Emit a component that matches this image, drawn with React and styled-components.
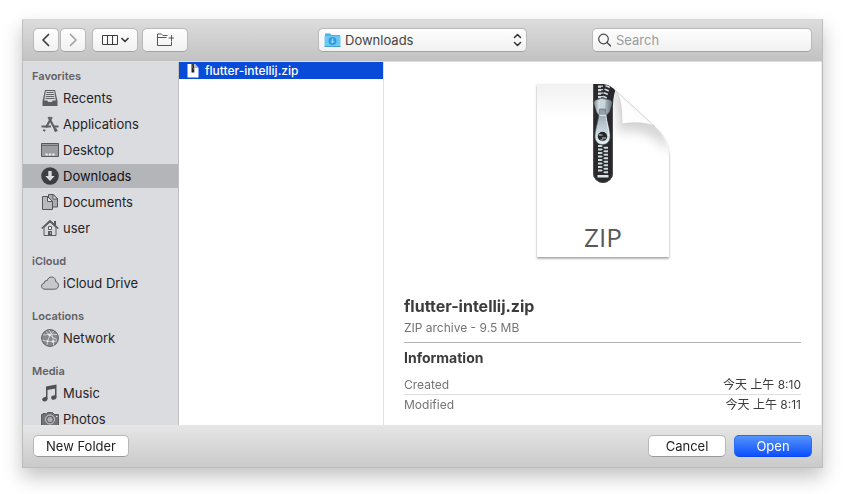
import React from "react";
import styled, { createGlobalStyle, css } from "styled-components";

const GlobalStyle = createGlobalStyle`
  * { box-sizing: border-box; }
  html, body, #root { height: 100%; }
  body {
    margin: 0;
    background: #fff;
    font-family: Inter, "Noto Sans CJK SC", sans-serif;
    font-size: 13px;
    color: #262626;
  }
  button, input, select { font: inherit; color: inherit; }
`;

const Desktop = styled.div`
  display: flex;
  height: 100%;
  padding: 19px 22px 26px;
`;

const Dialog = styled.main`
  flex: 1;
  min-width: 0;
  display: flex;
  flex-direction: column;
  border: 1px solid #bdbdbd;
  border-top-color: #d8d8d8;
  box-shadow: 0 9px 18px rgba(0, 0, 0, 0.24);
`;

const Toolbar = styled.header`
  display: grid;
  grid-template-columns: 1fr minmax(120px, 209px) 1fr;
  align-items: center;
  height: 42px;
  flex: none;
  padding: 0 10px 2px;
  border-bottom: 1px solid #dedede;
  background: linear-gradient(#dcdcdc, #c2c2c2);
`;

const Tools = styled.div`
  display: flex;
  gap: 4px;
`;

const Segments = styled.div`
  display: flex;
  gap: 1px;
  margin-right: 2px;
`;

const raised = css`
  height: 24px;
  border: 1px solid #b9b9b9;
  border-bottom-color: #a3a3a3;
  border-radius: 5px;
  background: linear-gradient(#fefefe, #f1f1f1);
`;

const ToolButton = styled.button`
  ${raised}
  display: flex;
  align-items: center;
  justify-content: center;
  gap: 4px;
  width: ${(p) => (p.$narrow ? 26 : 46)}px;
  padding: 0;
  color: #3c3c3c;
`;

const FieldBox = styled.label`
  ${raised}
  display: flex;
  align-items: center;
  gap: 4px;
  min-width: 0;
  padding: 0 4px 0 5px;
`;

const SearchBox = styled(FieldBox)`
  justify-self: end;
  width: 220px;
  max-width: 90%;
  gap: 5px;
`;

const LocationSelect = styled.select`
  flex: 1;
  min-width: 0;
  padding: 0;
  border: 0;
  outline: 0;
  appearance: none;
  background: none;
  color: #444;
`;

const SearchInput = styled.input`
  flex: 1;
  min-width: 0;
  padding: 0;
  border: 0;
  outline: 0;
  background: none;
  &::placeholder { color: #9b9b9b; opacity: 1; }
`;

const Body = styled.div`
  flex: 1;
  min-height: 0;
  display: flex;
  background: #fff;
`;

const Sidebar = styled.nav`
  flex: none;
  width: 156px;
  padding-top: 6px;
  overflow: hidden auto;
  scrollbar-width: none;
  border-right: 1px solid #c0c0c3;
  background: #dbdce0;
`;

const SidebarGroup = styled.section`
  display: flex;
  flex-direction: column;
  gap: 2px;
  margin-bottom: 13px;
`;

const SidebarHeading = styled.h2`
  margin: 0;
  padding-left: 9px;
  font-size: 11px;
  line-height: 16px;
  font-weight: 600;
  color: #616165;
`;

const SidebarItem = styled.button`
  display: flex;
  align-items: center;
  gap: 4px;
  height: 24px;
  flex: none;
  padding: 0 0 0 18px;
  border: 0;
  text-align: left;
  line-height: 16px;
  background: ${(p) => (p.$selected ? "#b4b5b9" : "transparent")};
  color: ${(p) => (p.$selected ? "#101010" : "#242426")};
`;

const FileColumn = styled.section`
  flex: none;
  width: 205px;
  border-right: 1px solid #e2e2e2;
`;

const FileRow = styled.button`
  display: flex;
  align-items: center;
  gap: 6px;
  width: 100%;
  height: 17px;
  padding: 0 8px 1px;
  border: 0;
  background: #084bd8;
  color: #fff;
  font-size: 12px;
  font-weight: 500;
`;

const Preview = styled.section`
  flex: 1;
  min-width: 0;
  padding: 16px 20px 0;
  border-right: 1px solid #ececec;
  color: #3c3c3c;
`;

const Artwork = styled.div`
  display: flex;
  justify-content: center;
  margin-bottom: 30px;
`;

const FileTitle = styled.h1`
  margin: 0;
  font-size: 16px;
  line-height: 20px;
  font-weight: 700;
`;

const FileKind = styled.p`
  margin: 0;
  padding: 3px 0 6px;
  border-bottom: 1px solid #b3b3b3;
  font-size: 12px;
  line-height: 17px;
  color: #747474;
`;

const InfoTitle = styled.h2`
  margin: 6px 0 8px;
  font-size: 14px;
  line-height: 18px;
  font-weight: 700;
`;

const InfoTable = styled.table`
  width: 100%;
  border-collapse: collapse;
  font-size: 12px;
  line-height: 19px;
  tr + tr { border-top: 1px solid #dedede; }
`;

const InfoName = styled.th`
  padding: 0;
  text-align: left;
  font-weight: 400;
  color: #747474;
`;

const InfoValue = styled.td`
  padding: 0;
  text-align: right;
`;

const Footer = styled.footer`
  display: flex;
  align-items: center;
  gap: 8px;
  flex: none;
  height: 42px;
  padding: 0 10px;
  background: linear-gradient(#e6e6e6, #cacaca);
`;

const PushButton = styled.button`
  height: 22px;
  min-width: 78px;
  padding: 0 12px;
  border: 1px solid ${(p) => (p.$primary ? "#2a6cf5" : "#b8b8b8")};
  border-bottom-color: ${(p) => (p.$primary ? "#0a48ee" : "#999")};
  border-radius: 5px;
  background: ${(p) => (p.$primary ? "linear-gradient(#5494fb, #0d50ff)" : "#fff")};
  color: ${(p) => (p.$primary ? "#fff" : "#222")};
`;

const Spacer = styled.div`
  flex: 1;
`;

function ChevronIcon({ d, muted }) {
  return (
    <svg width="10" height="14" viewBox="0 0 10 14" fill="none" stroke={muted ? "#a2a2a2" : "#3c3c3c"} strokeWidth="1.7" strokeLinecap="round" strokeLinejoin="round">
      <path d={d} />
    </svg>
  );
}

function ColumnsIcon() {
  return (
    <svg width="28" height="12" viewBox="0 0 28 12" fill="none" stroke="#3c3c3c">
      <path d="M1.5 1.5h15v9h-15zM6.5 1.5v9M11.5 1.5v9" />
      <path d="M21 4.5l3 3 3-3" strokeWidth="1.7" strokeLinecap="round" strokeLinejoin="round" />
    </svg>
  );
}

function NewFolderIcon() {
  return (
    <svg width="18" height="14" viewBox="0 0 18 14" fill="none" stroke="#555">
      <path d="M11.5 2.5H7L5.500 1H1.500v11.500h14V8.500M1.500 4.500h9" />
      <path d="M15.500 2v6M12.500 5h6" />
    </svg>
  );
}

function FolderIcon() {
  return (
    <svg width="17" height="16" viewBox="0 0 17 16">
      <path d="M1 1.5h5l1.5 1.5H16v12H1z" fill="#4fb0e2" />
      <path d="M.5 4h16v10.5h-16z" fill="#6cc9f5" />
      <path d="M.5 14.5h16" stroke="#489fce" />
      <circle cx="8.5" cy="9" r="4" fill="#3399da" />
      <path d="M7.7 6.500h1.600v2.700h1.600L8.500 11.600 6.100 9.200h1.600z" fill="#8dd7fa" />
    </svg>
  );
}

function UpDownIcon() {
  return (
    <svg width="9" height="14" viewBox="0 0 9 14" fill="none" stroke="#333" strokeWidth="1.5" strokeLinecap="round" strokeLinejoin="round">
      <path d="M1.500 4.500l3-3 3 3M1.500 9.500l3 3 3-3" />
    </svg>
  );
}

function SearchIcon() {
  return (
    <svg width="13" height="14" viewBox="0 0 13 14" fill="none" stroke="#444" strokeWidth="1.2" strokeLinecap="round">
      <circle cx="5.500" cy="6" r="4.800" />
      <path d="M9 9.500l3.500 3.500" />
    </svg>
  );
}

const glyphs = {
  recents: (
    <>
      <path d="M4 1h10l2.500 11v5h-15v-5z" fill="#5d5d61" />
      <path d="M4.800 2h8.400l1.600 9.500h-3l-1 1.500H7.200l-1-1.500h-3z" fill="#d5d6da" />
      <path d="M5.500 3.500h7M5 5.500h8M4.800 7.500h8.400M4.500 9.500h9" stroke="#66666a" />
    </>
  ),
  applications: (
    <g fill="none" stroke="#606064">
      <path d="M10.800 2L5 12.500M3.700 14.500l-.9 1.800" strokeWidth="2.200" />
      <path d="M7.500 2l7.300 13.500" strokeWidth="2.200" />
      <path d="M.5 11.500h9.500M13 11.500h4.500" strokeWidth="2" />
      <path d="M14 14l1.500 2.500" strokeWidth="3" />
    </g>
  ),
  desktop: (
    <>
      <path d="M.5 2.500h17v13H.5z" fill="#9c9da1" stroke="#59595d" />
      <path d="M1 4.500h16" stroke="#6b6b6f" />
      <path d="M4.500 13.500h2.200M7.900 13.500h2.200M11.300 13.500h2.200" stroke="#f0f0f2" strokeWidth="2" />
    </>
  ),
  downloads: (
    <>
      <circle cx="9" cy="9" r="8.800" fill="#3e3e41" />
      <path d="M7.300 4h3.400v5h3L9 14 4.300 9h3z" fill="#dcdce0" />
    </>
  ),
  documents: (
    <g stroke="#56565a" strokeLinejoin="round">
      <path d="M7.500 1.500h5l4 4v8.500h-9z" fill="#aaabaf" />
      <path d="M12 1.500v4.500h4.500z" fill="#ededf0" />
      <path d="M1.500 3.500h5l5 5v8h-10z" fill="#b9babe" />
      <path d="M6.500 3.500v5h5z" fill="#e8e8eb" />
    </g>
  ),
  home: (
    <>
      <path d="M13 2h2v5l-2-2z" fill="#55555a" />
      <path d="M3 8.500L9 3l6 5.500v8H3z" fill="#d8d9dd" stroke="#5c5c60" />
      <path d="M.7 9.500L9 1.800l8.300 7.700" fill="none" stroke="#55555a" strokeWidth="1.500" />
      <path d="M7.500 7.500h3v3h-3z" fill="#f0f0f2" stroke="#5c5c60" />
      <path d="M7 12h4v4.500H7z" fill="#5c5c60" />
      <path d="M9 14h1" stroke="#ddd" />
    </>
  ),
  cloud: (
    <path d="M4 15.200C1.800 15.200.5 13.900.5 12.200c0-1.700 1.200-2.900 2.700-3 0-1.900 1.400-3 2.900-2.500C6.800 4.400 8.400 3 10.500 3c2.700 0 4.400 2 4.300 4.800 1.700.4 2.700 1.800 2.700 3.500 0 2.300-1.600 3.900-3.800 3.900z" fill="#c7c8cc" stroke="#5d5d61" />
  ),
  network: (
    <>
      <circle cx="9" cy="9" r="8.400" fill="#87888c" stroke="#5c5c60" />
      <g fill="none" stroke="#d9dade" strokeWidth="0.900">
        <path d="M5 2.500c2 2 6 6 11 8M12.500 2c-3 3-6 8-6.500 14M2 6c4-.5 9-1 14-.5M1.500 11c4 1.500 10 2 14.500 1M8 1c3 4 5 9 4.500 15.500" />
      </g>
      <circle cx="8.500" cy="6" r="1.200" fill="#eee" />
      <circle cx="12" cy="12.500" r="1.200" fill="#eee" />
      <circle cx="6.500" cy="12" r="1" fill="#eee" />
    </>
  ),
  music: (
    <>
      <path d="M5 2.500L15.500.5v3.700L6.500 6v-3.500zM5 2.500h1.500V15H5zM14 3h1.500v10.500H14z" fill="#505054" />
      <ellipse cx="3.800" cy="15.200" rx="2.700" ry="2.200" transform="rotate(-20 3.800 15.200)" fill="#505054" />
      <ellipse cx="12.800" cy="13.500" rx="2.700" ry="2.200" transform="rotate(-20 12.800 13.500)" fill="#505054" />
    </>
  ),
  photos: (
    <>
      <path d="M2 3.500h2.500v1H5l1.500-2h5l1.500 2h4.500v12H.5v-12H2z" fill="#727276" stroke="#5c5c60" />
      <circle cx="9" cy="9.500" r="4.500" fill="#66666a" stroke="#d5d5d9" />
      <circle cx="9" cy="9.500" r="2.600" fill="#aeafb3" />
      <path d="M15 6.500h1.500" stroke="#e2e2e5" />
    </>
  ),
};

function SidebarIcon({ name }) {
  return (
    <svg width="18" height="18" viewBox="0 0 18 18" aria-hidden="true">
      {glyphs[name]}
    </svg>
  );
}

function SmallZipIcon() {
  return (
    <svg width="12" height="15" viewBox="0 0 12 15">
      <path d="M.5 1H8l3.500 4v9.500H.5z" fill="#fff" />
      <path d="M8 1v4h3.500z" fill="#a9bce8" />
      <path d="M4.500 1h2.800v8.500H4.500z" fill="#222" />
      <path d="M5.500 2h1M5 4h1M6 6h1" stroke="#999" />
    </svg>
  );
}

const lowerTeeth = [67, 70.5, 74, 77.5, 81, 84.5, 88, 91.5];
const upperTeeth = [7.5, 11, 14.5, 18];

function ZipDocument() {
  const sheet = "M9 6H73C79 6 83 8 87 12L127 48.500C136 57 141 66 141 79V179H9Z";
  return (
    <svg width="150" height="188" viewBox="0 0 150 188" role="img" aria-label="ZIP document">
      <defs>
        <linearGradient id="paper" x1="0" y1="0" x2="0" y2="1">
          <stop offset="0" stopColor="#f1f1f1" />
          <stop offset="0.2" stopColor="#fff" />
        </linearGradient>
        <linearGradient id="flap" x1="0" y1="1" x2="0.650" y2="0.350">
          <stop offset="0" stopColor="#fff" />
          <stop offset="0.7" stopColor="#fdfdfd" />
          <stop offset="1" stopColor="#dcdcdc" />
        </linearGradient>
        <linearGradient id="metal">
          <stop offset="0" stopColor="#858e94" />
          <stop offset="0.350" stopColor="#e9f0f4" />
          <stop offset="0.650" stopColor="#a9b3ba" />
          <stop offset="1" stopColor="#66707a" />
        </linearGradient>
        <linearGradient id="pull" x1="0" y1="0" x2="0" y2="1">
          <stop offset="0" stopColor="#8b979e" />
          <stop offset="0.450" stopColor="#b9c9d2" />
          <stop offset="1" stopColor="#e9f0f4" />
        </linearGradient>
        <filter id="sheetShadow" x="-10%" y="-10%" width="120%" height="120%">
          <feDropShadow dx="0" dy="1.500" stdDeviation="1.300" floodOpacity="0.4" />
        </filter>
        <filter id="soft" x="-50%" y="-50%" width="200%" height="200%">
          <feGaussianBlur stdDeviation="6" />
        </filter>
        <clipPath id="sheetClip"><path d={sheet} /></clipPath>
      </defs>
      <path d={sheet} fill="url(#paper)" filter="url(#sheetShadow)" />
      <g clipPath="url(#sheetClip)">
        <path d="M86 8C90 22 90 44 90 54C108 50 128 54 142 76L138 50Z" fill="#777" opacity="0.330" filter="url(#soft)" />
        <path d="M65 4H90C87 13 85 19 85 27V95a10 10 0 0 1-20 0z" fill="#29292b" />
        <path d="M65.500 5v90a9.500 9.500 0 0 0 19 0V27" fill="none" stroke="#4c4c4e" />
        {upperTeeth.map((y, i) => (
          <g key={y} fill="#cedae0">
            <path d={`M70 ${y}h5v1.200h-2v1h-3z`} />
            <path d={`M${82 - i} ${y + 1}l-4-1.500-1 1.300 4.500 2z`} />
          </g>
        ))}
        {lowerTeeth.map((y) => (
          <g key={y} fill="#ccd9df">
            <path d={`M70 ${y}h3.500l1.500 1-1.500 1h-3.500z`} />
            <path d={`M80 ${y + 1.7}h-3.500l-1.500 1 1.500 1h3.500z`} />
          </g>
        ))}
        <path d="M69.500 97h11v2.500h-11z" fill="#dce6ea" />
      </g>
      <path d="M66 25q0-3 4-3.500q4.500-2 9 0q5 .5 5 3.500l-2.500 8.500q-2 3-4 4.500h-5q-3-1.500-4-4.500z" fill="url(#metal)" stroke="#68727a" strokeWidth="0.500" />
      <path d="M71.500 22h6l-1 15h-4z" fill="#c9d5dc" />
      <path d="M71.500 31h6c.5 12 4 18 4.500 27c.3 5-3 8.500-7.500 8.500S67 63 67 58c.5-9 4-15 4.500-27z" fill="url(#pull)" stroke="#5c666d" strokeWidth="0.600" />
      <path d="M71.200 37q3.300 1.500 6.600 0c.7 8 3.200 13 3.200 21" fill="none" stroke="#f6fafb" strokeWidth="0.800" />
      <circle cx="74.500" cy="58.500" r="4.700" fill="#252729" />
      <path d="M71 57h3.500M74 60h4M72.500 62h3" stroke="#cbd8de" />
      <path d="M87 12C93 19 94 31 94 46C105 44 118 44 127 48.500Z" fill="url(#flap)" stroke="#c7c7c7" strokeWidth="0.600" />
      <text x="75" y="169" textAnchor="middle" fontFamily="Open Sans, sans-serif" fontSize="26" fill="#585858">ZIP</text>
    </svg>
  );
}

const groups = [
  {
    title: "Favorites",
    items: [
      ["Recents", "recents"],
      ["Applications", "applications"],
      ["Desktop", "desktop"],
      ["Downloads", "downloads"],
      ["Documents", "documents"],
      ["user", "home"],
    ],
  },
  { title: "iCloud", items: [["iCloud Drive", "cloud"]] },
  { title: "Locations", items: [["Network", "network"]] },
  { title: "Media", items: [["Music", "music"], ["Photos", "photos"]] },
];

const details = [
  ["Created", "今天 上午 8:10"],
  ["Modified", "今天 上午 8:11"],
];

export default function App() {
  return (
    <>
      <GlobalStyle />
      <Desktop>
        <Dialog>
          <Toolbar>
            <Tools>
              <Segments>
                <ToolButton $narrow aria-label="Back"><ChevronIcon d="M7.500 1.500L2 7l5.500 5.500" /></ToolButton>
                <ToolButton $narrow aria-label="Forward"><ChevronIcon d="M2.500 1.500L8 7l-5.500 5.500" muted /></ToolButton>
              </Segments>
              <ToolButton aria-label="Column view"><ColumnsIcon /></ToolButton>
              <ToolButton aria-label="New folder here"><NewFolderIcon /></ToolButton>
            </Tools>
            <FieldBox>
              <FolderIcon />
              <LocationSelect aria-label="Location" defaultValue="Downloads">
                <option>Downloads</option>
              </LocationSelect>
              <UpDownIcon />
            </FieldBox>
            <SearchBox>
              <SearchIcon />
              <SearchInput type="search" placeholder="Search" aria-label="Search" />
            </SearchBox>
          </Toolbar>
          <Body>
            <Sidebar>
              {groups.map((group) => (
                <SidebarGroup key={group.title}>
                  <SidebarHeading>{group.title}</SidebarHeading>
                  {group.items.map(([label, icon]) => (
                    <SidebarItem key={label} $selected={label === "Downloads"}>
                      <SidebarIcon name={icon} />
                      {label}
                    </SidebarItem>
                  ))}
                </SidebarGroup>
              ))}
            </Sidebar>
            <FileColumn>
              <FileRow><SmallZipIcon />flutter-intellij.zip</FileRow>
            </FileColumn>
            <Preview>
              <Artwork><ZipDocument /></Artwork>
              <FileTitle>flutter-intellij.zip</FileTitle>
              <FileKind>ZIP archive - 9.5 MB</FileKind>
              <InfoTitle>Information</InfoTitle>
              <InfoTable>
                <tbody>
                  {details.map(([name, value]) => (
                    <tr key={name}>
                      <InfoName scope="row">{name}</InfoName>
                      <InfoValue>{value}</InfoValue>
                    </tr>
                  ))}
                </tbody>
              </InfoTable>
            </Preview>
          </Body>
          <Footer>
            <PushButton>New Folder</PushButton>
            <Spacer />
            <PushButton>Cancel</PushButton>
            <PushButton $primary>Open</PushButton>
          </Footer>
        </Dialog>
      </Desktop>
    </>
  );
}
